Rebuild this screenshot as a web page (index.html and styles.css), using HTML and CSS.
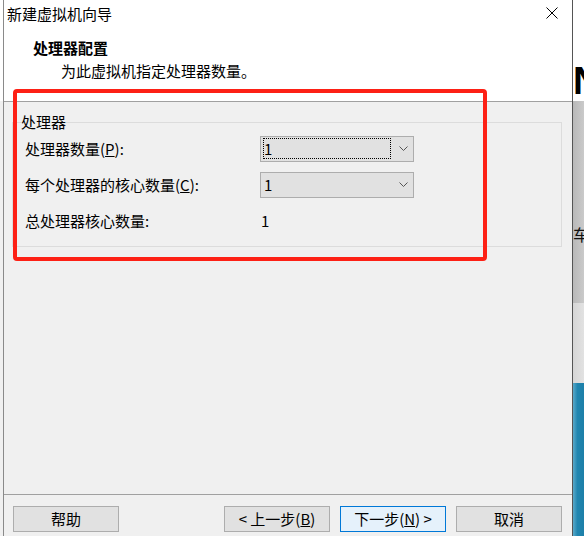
FILE: index.html
```html
<!DOCTYPE html>
<html lang="zh-CN">
<head>
<meta charset="utf-8">
<title>新建虚拟机向导</title>
<link rel="stylesheet" href="styles.css">
</head>
<body>
<div class="screen">
  <div class="gutter"></div>
  <div class="dialog">
    <div class="top">
      <div class="titlebar">
        <span class="title">新建虚拟机向导</span>
        <svg class="close" width="12" height="12" viewBox="0 0 12 12"><path d="M0.5 0.5 L11.5 11.5 M11.5 0.5 L0.5 11.5" stroke="#000" stroke-width="1" fill="none"/></svg>
      </div>
      <div class="header">
        <div class="h-title">处理器配置</div>
        <div class="h-sub">为此虚拟机指定处理器数量。</div>
      </div>
    </div>
    <div class="body">
      <fieldset class="group">
        <legend>处理器</legend>
        <div class="grid">
          <span class="label">处理器数量(<u>P</u>):</span>
          <div class="combo">
            <span class="value focus">1</span>
            <span class="arrow"><svg width="9" height="5" viewBox="0 0 9 5"><path d="M0.5 0.5 L4.5 4.5 L8.5 0.5" stroke="#555" stroke-width="1" fill="none"/></svg></span>
          </div>
          <span class="label">每个处理器的核心数量(<u>C</u>):</span>
          <div class="combo">
            <span class="value">1</span>
            <span class="arrow"><svg width="9" height="5" viewBox="0 0 9 5"><path d="M0.5 0.5 L4.5 4.5 L8.5 0.5" stroke="#555" stroke-width="1" fill="none"/></svg></span>
          </div>
          <span class="label">总处理器核心数量:</span>
          <span class="total">1</span>
        </div>
      </fieldset>
    </div>
    <div class="footer">
      <button class="btn">帮助</button>
      <div class="nav">
        <button class="btn">&lt; 上一步(<u>B</u>)</button>
        <button class="btn primary">下一步(<u>N</u>) &gt;</button>
        <button class="btn">取消</button>
      </div>
    </div>
  </div>
  <div class="backdrop">
    <div class="bd-white"><span class="bd-n">N</span></div>
    <div class="bd-gray"><span class="bd-car">车</span></div>
    <div class="bd-light"></div>
    <div class="bd-blue"></div>
  </div>
  <div class="highlight"></div>
</div>
</body>
</html>
```

FILE: styles.css
```css
* { box-sizing: border-box; }
html, body { margin: 0; padding: 0; }
body {
  width: 584px;
  height: 536px;
  overflow: hidden;
  font-family: "Noto Sans CJK SC", sans-serif;
  font-size: 15px;
  color: #000;
  background: #f0f0f0;
}
.screen {
  position: relative;
  display: flex;
  width: 584px;
  height: 536px;
}
.gutter {
  width: 3px;
  flex: none;
  background: linear-gradient(#fff 0 101px, #f0f0f0 101px);
}
.dialog {
  width: 570px;
  flex: none;
  display: flex;
  flex-direction: column;
  border-left: 1px solid #8a8a8a;
  border-right: 1px solid #555;
  background: #f0f0f0;
}
.top {
  height: 102px;
  background: #fff;
  border-bottom: 1px solid #a0a0a0;
}
.titlebar {
  height: 28px;
  display: flex;
  justify-content: space-between;
  align-items: flex-start;
  padding: 0 14px 0 3px;
}
.title { line-height: 28px; }
.close { margin-top: 7px; display: block; }
.header { padding-top: 10px; }
.h-title {
  font-weight: bold;
  line-height: 20px;
  padding-left: 29px;
}
.h-sub {
  line-height: 20px;
  margin-top: 3px;
  padding-left: 57px;
}
.body {
  flex: 1;
  padding: 10px 10px 0 8px;
}
.group {
  margin: 0;
  border: 1px solid #dcdcdc;
  padding: 4px 0 12px 0;
  min-width: 0;
}
.group legend {
  padding: 0;
  margin-left: 8px;
  line-height: 20px;
}
.grid {
  margin-left: 12px;
  display: grid;
  grid-template-columns: 235px 154px;
  grid-auto-rows: 26px;
  row-gap: 10px;
  align-items: center;
}
.label { line-height: 20px; }
.combo {
  height: 26px;
  display: flex;
  align-items: stretch;
  border: 1px solid #adadad;
  background: #e1e1e1;
  padding: 1px 0 2px 2px;
}
.value {
  width: 128px;
  border: 1px dotted transparent;
  line-height: 19px;
  padding-left: 0;
}
.value.focus { border-color: #000; }
.arrow {
  flex: 1;
  display: flex;
  align-items: center;
  justify-content: center;
  padding-left: 3px;
}
.arrow svg { display: block; }
.total { padding-left: 1px; line-height: 20px; }
.footer {
  height: 42px;
  flex: none;
  border-top: 1px solid #a0a0a0;
  display: flex;
  justify-content: space-between;
  align-items: flex-start;
  padding: 11px 10px 0 9px;
}
.nav { display: flex; gap: 10px; }
.btn {
  width: 106px;
  height: 26px;
  padding: 0;
  border: 1px solid #adadad;
  background: #e1e1e1;
  font-family: inherit;
  font-size: 15px;
  line-height: 24px;
  color: #000;
}
.btn.primary {
  border-color: #0078d7;
  background: #e5f1fb;
}
.backdrop {
  width: 11px;
  flex: none;
  display: flex;
  flex-direction: column;
  overflow: hidden;
}
.bd-white {
  height: 101px;
  background: #fff;
  overflow: hidden;
  padding-top: 62px;
}
.bd-n {
  display: block;
  font-family: "Liberation Sans", sans-serif;
  font-weight: bold;
  font-size: 38px;
  line-height: 38px;
  white-space: nowrap;
}
.bd-gray {
  height: 202px;
  background: linear-gradient(90deg, #b9b9b9, #cacaca);
  overflow: hidden;
  padding-top: 122px;
}
.bd-car {
  display: block;
  font-size: 16px;
  line-height: 22px;
  white-space: nowrap;
  color: #111;
}
.bd-light {
  height: 80px;
  background: linear-gradient(90deg, #d6d6d6, #e2e2e2);
}
.bd-blue {
  flex: 1;
  background: linear-gradient(90deg, #5aa9c9, #2186b0 40%, #1d7fa8);
}
.highlight {
  position: absolute;
  left: 13px;
  top: 89px;
  width: 474px;
  height: 172px;
  border: 4px solid #fd2015;
  border-radius: 4px;
}
```
